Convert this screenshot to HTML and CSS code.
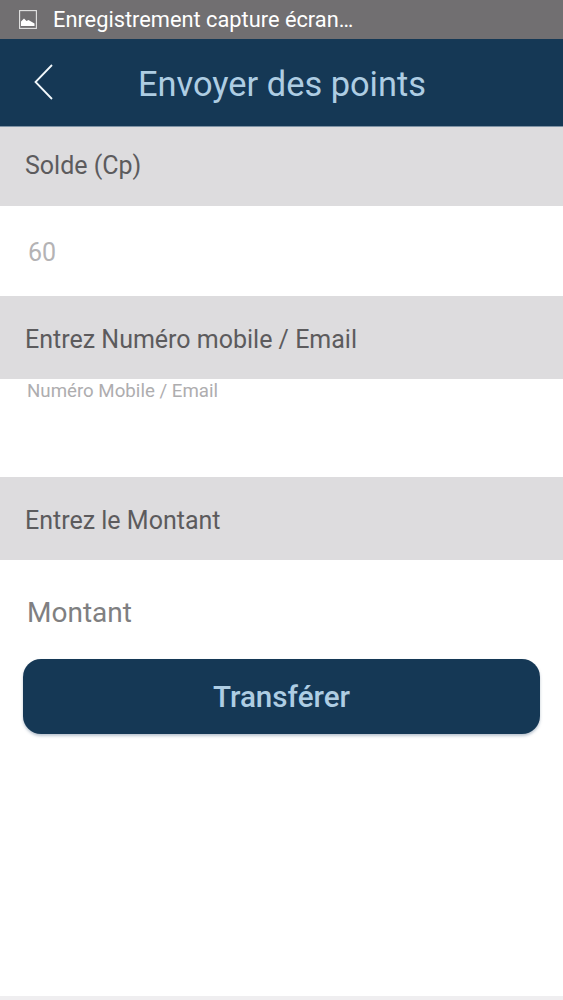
FILE: index.html
```
<!DOCTYPE html>
<html lang="fr">
<head>
<meta charset="utf-8">
<title>Envoyer des points</title>
<link rel="stylesheet" href="styles.css">
</head>
<body>
<div class="status">
  <svg class="status-icon" width="18" height="19" viewBox="0 0 18 19"><rect x="0.6" y="0.6" width="16.8" height="17.8" fill="none" stroke="#e4e4e4" stroke-width="1.1"/><path d="M2 16v-4.5l3-3 2.5 2.5 2-1 2.5 1.5 3.5 2V16z" fill="#fff"/></svg>
  <span class="status-text">Enregistrement capture écran…</span>
</div>
<header class="appbar">
  <svg class="back" width="20" height="36" viewBox="0 0 20 36"><path d="M18 1 1.5 18 18 35" fill="none" stroke="#f2f8fb" stroke-width="1.8"/></svg>
  <h1 class="title">Envoyer des points</h1>
</header>
<div class="section section-solde">Solde (Cp)</div>
<div class="value-row">60</div>
<div class="section section-mobile">Entrez Numéro mobile / Email</div>
<div class="mobile-row">Numéro Mobile / Email</div>
<div class="section section-amount">Entrez le Montant</div>
<div class="amount-row">Montant</div>
<div class="button-wrap"><button class="transfer">Transférer</button></div>
<div class="spacer"></div>
<div class="bottom"></div>
</body>
</html>
```
FILE: styles.css
```
* { box-sizing: border-box; }
html, body { margin: 0; height: 1000px; overflow: hidden; }
body { display: flex; flex-direction: column; background: #fff; font-family: Roboto, sans-serif; }
.status { height: 39px; background: #716f71; display: flex; align-items: center; padding-left: 19px; flex: none; }
.status-icon { flex: none; }
.status-text { margin-left: 16px; color: #fff; font-size: 21.8px; }
.appbar { height: 88px; flex: none; background: #153855; border-bottom: 1px solid #7f93a5; display: flex; align-items: center; padding-left: 34px; }
.back { flex: none; margin-top: -1px; }
.title { margin: 3px 0 0 84px; color: #aecde3; font-size: 34.4px; font-weight: 400; line-height: 40px; }
.section { background: #dddcde; color: #5c5b5d; font-size: 25px; padding-left: 25px; flex: none; }
.section-solde { height: 79px; padding-top: 24px; line-height: 30px; }
.value-row { height: 90px; flex: none; padding: 32px 0 0 28px; color: #b4b3b5; font-size: 25px; line-height: 30px; }
.section-mobile { height: 83px; padding-top: 29px; line-height: 30px; }
.mobile-row { height: 98px; flex: none; padding: 0 0 0 27px; color: #aeadaf; font-size: 18.7px; line-height: 24px; }
.section-amount { height: 83px; padding-top: 29px; line-height: 30px; }
.amount-row { height: 99px; flex: none; padding: 36px 0 0 27px; color: #807f81; font-size: 28px; line-height: 34px; }
.button-wrap { padding: 0 23px; flex: none; }
.transfer { display: block; width: 100%; height: 75px; border: 0; border-radius: 18px; background: #153855; color: #aecde3; font-family: Roboto, sans-serif; font-size: 29.6px; font-weight: 500; box-shadow: 0 2px 3px rgba(60,90,120,.35); }
.spacer { flex: 1; }
.bottom { height: 4px; flex: none; background: #efeef0; }
```
